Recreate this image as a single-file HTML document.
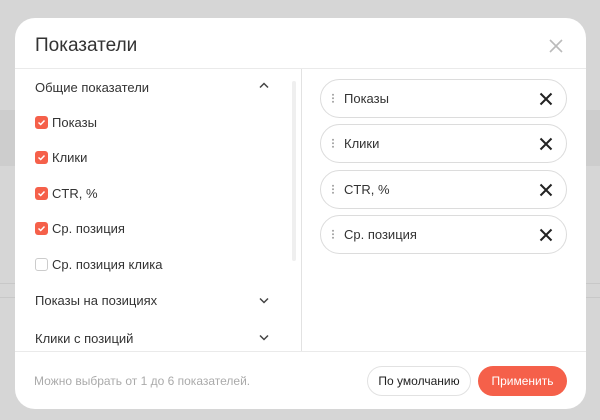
<!DOCTYPE html>
<html><head><meta charset="utf-8"><style>
*{box-sizing:border-box;margin:0;padding:0}
body{width:600px;height:420px;background:#d6d6d6;font-family:"Liberation Sans",Arial,sans-serif;position:relative;overflow:hidden;color:#333}
.band{position:absolute;left:0;right:0;top:110px;height:56px;background:#cdcdcd}
.ln{position:absolute;left:0;right:0;height:1px;background:#c8c8c8}
.modal{position:absolute;left:15px;top:18px;width:571px;height:391px;background:#fff;border-radius:20px;overflow:hidden}
.title{position:absolute;left:20px;top:17px;font-size:19px;color:#333}
.close{position:absolute;left:534px;top:21px}
.hline{position:absolute;left:0;right:0;top:50px;height:1px;background:#eaeaea}
.vline{position:absolute;left:286px;top:51px;width:1px;height:282px;background:#e2e2e2}
.fline{position:absolute;left:0;right:0;top:333px;height:1px;background:#eaeaea}
.t{position:absolute;font-size:13px;color:#333;white-space:nowrap}
.cb{position:absolute;left:20px;width:13px;height:13px;border-radius:3px;background:#f5604a}
.cb svg{position:absolute;left:2px;top:2px}
.cb.off{background:#fff;border:1px solid #ccc}
.scroll{position:absolute;left:277px;top:63px;width:4px;height:180px;background:#efefef;border-radius:2px}
.chip{position:absolute;left:305px;width:247px;height:39px;border:1px solid #dcdcdc;border-radius:20px}
.chip .d{position:absolute;left:11px;top:13px;width:2px;height:10px;background:radial-gradient(circle,#aaa 45%,transparent 55%) 0 0/2px 3.5px repeat-y}
.chip .t{left:23px;top:11px}
.chip svg{position:absolute;right:13px;top:12px}
.btn{position:absolute;top:348px;height:30px;border-radius:15px;font-size:12px;text-align:center;line-height:30px}
</style></head><body>
<div class="band"></div>
<div class="ln" style="top:283px"></div>
<div class="ln" style="top:297px"></div>
<div class="modal">
<div class="title">Показатели</div>
<svg class="close" width="14" height="14" viewBox="0 0 14 14"><path d="M1 1L13 13M13 1L1 13" stroke="#bbb" stroke-width="1.6"/></svg>
<div class="hline"></div>
<div class="t" style="left:20px;top:62px">Общие показатели</div>
<svg style="position:absolute;left:244px;top:64px" width="10" height="7" viewBox="0 0 10 7"><path d="M1 5.5L5 1.5L9 5.5" stroke="#444" stroke-width="1.5" fill="none"/></svg>
<div class="cb" style="top:98px"><svg width="9" height="9" viewBox="0 0 9 9"><path d="M1.5 4.5L3.7 6.5L7.5 2.5" stroke="#fff" stroke-width="1.5" fill="none"/></svg></div>
<div class="t" style="left:37px;top:97px">Показы</div>
<div class="cb" style="top:133px"><svg width="9" height="9" viewBox="0 0 9 9"><path d="M1.5 4.5L3.7 6.5L7.5 2.5" stroke="#fff" stroke-width="1.5" fill="none"/></svg></div>
<div class="t" style="left:37px;top:132px">Клики</div>
<div class="cb" style="top:169px"><svg width="9" height="9" viewBox="0 0 9 9"><path d="M1.5 4.5L3.7 6.5L7.5 2.5" stroke="#fff" stroke-width="1.5" fill="none"/></svg></div>
<div class="t" style="left:37px;top:168px">CTR, %</div>
<div class="cb" style="top:204px"><svg width="9" height="9" viewBox="0 0 9 9"><path d="M1.5 4.5L3.7 6.5L7.5 2.5" stroke="#fff" stroke-width="1.5" fill="none"/></svg></div>
<div class="t" style="left:37px;top:203px">Ср. позиция</div>
<div class="cb off" style="top:240px"></div>
<div class="t" style="left:37px;top:239px">Ср. позиция клика</div>
<div class="t" style="left:20px;top:275px">Показы на позициях</div>
<svg style="position:absolute;left:244px;top:279px" width="10" height="7" viewBox="0 0 10 7"><path d="M1 1.5L5 5.5L9 1.5" stroke="#444" stroke-width="1.5" fill="none"/></svg>
<div class="t" style="left:20px;top:313px">Клики с позиций</div>
<svg style="position:absolute;left:244px;top:316px" width="10" height="7" viewBox="0 0 10 7"><path d="M1 1.5L5 5.5L9 1.5" stroke="#444" stroke-width="1.5" fill="none"/></svg>
<div class="scroll"></div>
<div class="vline"></div>
<div class="chip" style="top:61px"><div class="d"></div><div class="t">Показы</div><svg width="14" height="14" viewBox="0 0 14 14"><path d="M1.5 1.5L12.5 12.5M12.5 1.5L1.5 12.5" stroke="#222" stroke-width="2"/></svg></div>
<div class="chip" style="top:106px"><div class="d"></div><div class="t">Клики</div><svg width="14" height="14" viewBox="0 0 14 14"><path d="M1.5 1.5L12.5 12.5M12.5 1.5L1.5 12.5" stroke="#222" stroke-width="2"/></svg></div>
<div class="chip" style="top:152px"><div class="d"></div><div class="t">CTR, %</div><svg width="14" height="14" viewBox="0 0 14 14"><path d="M1.5 1.5L12.5 12.5M12.5 1.5L1.5 12.5" stroke="#222" stroke-width="2"/></svg></div>
<div class="chip" style="top:197px"><div class="d"></div><div class="t">Ср. позиция</div><svg width="14" height="14" viewBox="0 0 14 14"><path d="M1.5 1.5L12.5 12.5M12.5 1.5L1.5 12.5" stroke="#222" stroke-width="2"/></svg></div>
<div class="fline"></div>
<div class="t" style="left:19px;top:356px;font-size:12px;color:#aaa">Можно выбрать от 1 до 6 показателей.</div>
<div class="btn" style="left:352px;width:104px;border:1px solid #e2e2e2;color:#222;line-height:28px">По умолчанию</div>
<div class="btn" style="left:463px;width:89px;background:#f5604a;color:#fff">Применить</div>
</div>
</body></html>
